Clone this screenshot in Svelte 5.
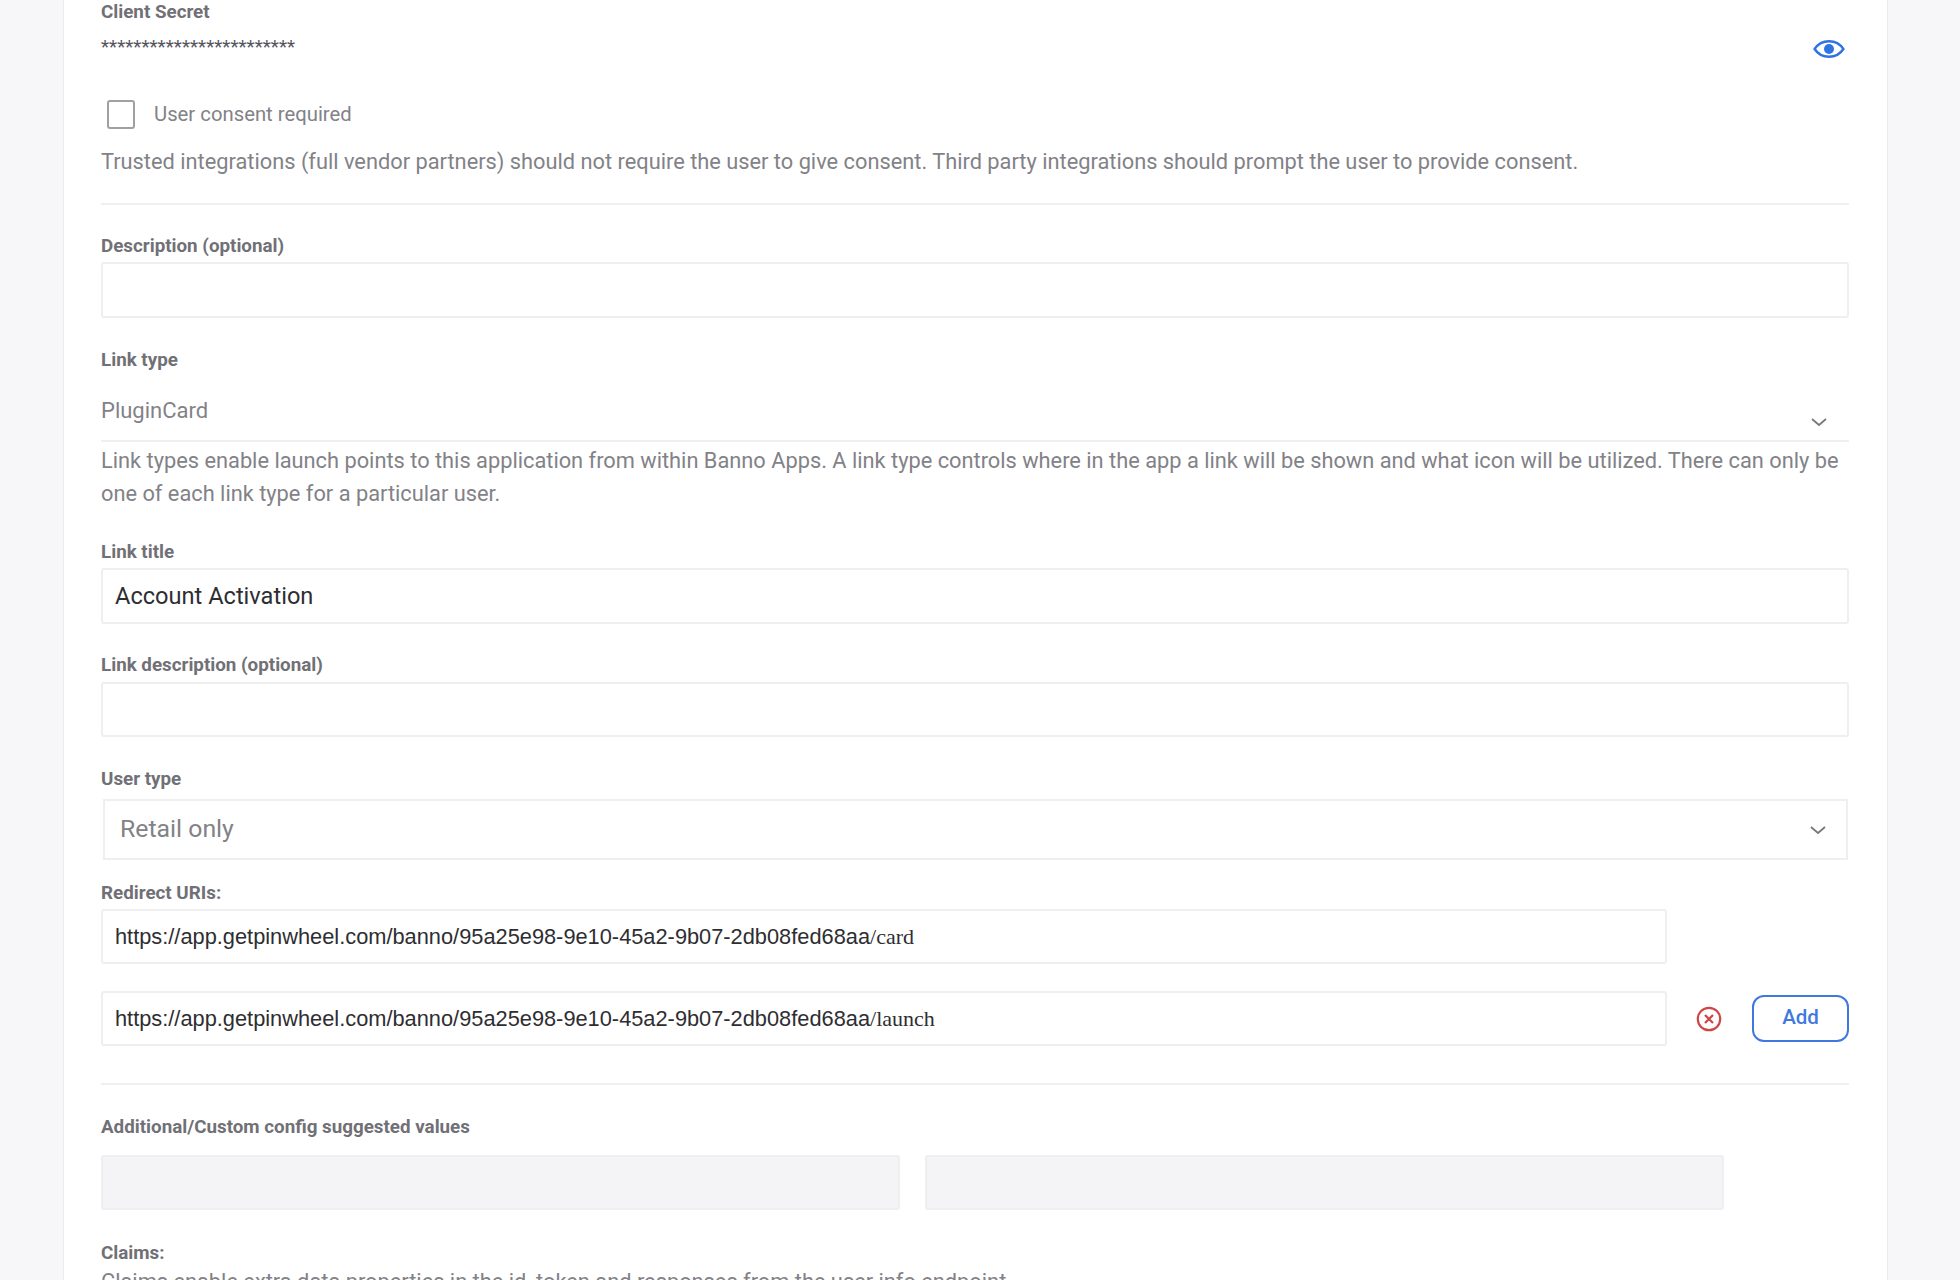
<script>
    const base = 'https://app.getpinwheel.com/banno/95a25e98-9e10-45a2-9b07-2db08fed68aa';
</script>

<div class="card">
    <div class="label">Client Secret</div>
    <div class="secret">
        <span class="stars">************************</span>
        <svg class="eye" width="32" height="20" viewBox="0 0 32 20" aria-hidden="true">
            <path d="M1.6 10C5 4.8 10 2.2 16 2.2S27 4.8 30.4 10C27 15.2 22 17.8 16 17.8S5 15.2 1.6 10Z" fill="none" stroke="#2f72e4" stroke-width="2.4" />
            <circle cx="16" cy="10" r="5" fill="#2f72e4" />
        </svg>
    </div>
    <div class="consent">
        <span class="checkbox"></span>
        <span class="consent-text">User consent required</span>
    </div>
    <p class="help trusted">Trusted integrations (full vendor partners) should not require the user to give consent. Third party integrations should prompt the user to provide consent.</p>
    <hr class="rule-top" />

    <div class="label description">Description (optional)</div>
    <div class="input description-input"></div>

    <div class="label link-type">Link type</div>
    <div class="underlined">
        <span>PluginCard</span>
        <svg class="chevron low" width="18" height="10" viewBox="0 0 18 10" aria-hidden="true">
            <path d="M2 2l7 6 7-6" fill="none" stroke="#77787d" stroke-width="1.8" />
        </svg>
    </div>
    <p class="help link-help">Link types enable launch points to this application from within Banno Apps. A link type controls where in the app a link will be shown and what icon will be utilized. There can only be one of each link type for a particular user.</p>

    <div class="label link-title">Link title</div>
    <div class="input title-input">Account Activation</div>

    <div class="label link-desc">Link description (optional)</div>
    <div class="input desc-input"></div>

    <div class="label user-type">User type</div>
    <div class="select">
        <span class="select-text">Retail only</span>
        <svg class="chevron" width="18" height="10" viewBox="0 0 18 10" aria-hidden="true">
            <path d="M2 2l7 6 7-6" fill="none" stroke="#77787d" stroke-width="1.8" />
        </svg>
    </div>

    <div class="label redirect">Redirect URIs:</div>
    <div class="uri-row first">
        <div class="input uri">{base}<span class="suffix">/card</span></div>
    </div>
    <div class="uri-row second">
        <div class="input uri">{base}<span class="suffix">/launch</span></div>
        <svg class="remove" width="26" height="26" viewBox="0 0 26 26" aria-hidden="true">
            <circle cx="13" cy="13" r="11.2" fill="none" stroke="#d04545" stroke-width="2.2" />
            <path d="M9 9l8 8M17 9l-8 8" stroke="#d04545" stroke-width="2.2" />
        </svg>
        <button class="add" type="button">Add</button>
    </div>
    <hr class="rule-bottom" />

    <div class="label additional">Additional/Custom config suggested values</div>
    <div class="config">
        <div class="input disabled"></div>
        <div class="input disabled"></div>
    </div>

    <div class="label claims">Claims:</div>
    <p class="help">Claims enable extra data properties in the id_token and responses from the user info endpoint</p>
</div>

<style>
    :global(body) {
        background: #f7f7f9;
        overflow: hidden;
    }

    .card {
        box-sizing: border-box;
        width: 1825px;
        height: 1280px;
        margin-left: 63px;
        padding: 0 38px 0 37px;
        overflow: hidden;
        background: #fff;
        border-left: 1px solid #ececee;
        border-right: 1px solid #ececee;
        font-family: Roboto, "Liberation Sans", sans-serif;
    }

    .label {
        font-size: 18.8px;
        line-height: 24px;
        font-weight: 700;
        color: #707076;
    }

    .help {
        margin: 0;
        font-size: 21.8px;
        line-height: 33px;
        color: #828287;
    }

    .secret {
        display: flex;
        justify-content: space-between;
        align-items: center;
        height: 30px;
        margin-top: 10px;
        padding-right: 4px;
    }

    .stars {
        margin-bottom: 4px;
        font-size: 18.8px;
        line-height: 24px;
        color: #55555f;
    }

    .consent {
        display: flex;
        align-items: center;
        gap: 19px;
        height: 29px;
        margin-top: 36px;
        padding-left: 6px;
        font-size: 20.3px;
        color: #828287;
    }

    .consent-text {
        margin-bottom: 2px;
    }

    .checkbox {
        box-sizing: border-box;
        width: 28px;
        height: 29px;
        border: 2px solid #a0a0a4;
        border-radius: 3px;
    }

    .trusted {
        margin-top: 16px;
    }

    hr {
        height: 2px;
        margin: 0;
        border: 0;
        background: #efeff1;
    }

    .rule-top {
        margin-top: 25px;
    }

    .rule-bottom {
        margin-top: 37px;
    }

    .input {
        box-sizing: border-box;
        display: flex;
        align-items: center;
        height: 56px;
        padding: 0 12px;
        background: #fff;
        border: 2px solid #efeff1;
        border-radius: 3px;
        font-size: 23.6px;
        color: #2e2e32;
    }

    .description { margin-top: 29px; }
    .description-input { margin-top: 4px; }
    .link-type { margin-top: 30px; }

    .underlined {
        box-sizing: border-box;
        display: flex;
        justify-content: space-between;
        height: 70px;
        padding: 27px 21px 0 0;
        border-bottom: 2px solid #efeff1;
        font-size: 22px;
        line-height: 24px;
        color: #828287;
    }

    .chevron {
        flex: none;
    }

    .chevron.low {
        margin-top: 18px;
    }

    .link-help { margin-top: 2px; }
    .link-title { margin-top: 30px; }
    .title-input { margin-top: 4px; }
    .link-desc { margin-top: 29px; }
    .desc-input { margin-top: 5px; height: 55px; }
    .user-type { margin-top: 30px; }

    .select {
        box-sizing: border-box;
        display: flex;
        justify-content: space-between;
        align-items: center;
        height: 61px;
        margin: 8px 1px 0 2px;
        padding: 0 19px 0 15px;
        border: 2px solid #efeff1;
        font-size: 24.8px;
        color: #828287;
    }

    .select-text {
        margin-bottom: 2px;
    }

    .redirect { margin-top: 21px; }

    .uri-row {
        display: flex;
        align-items: center;
    }

    .uri-row.first { margin-top: 4px; }
    .uri-row.second { margin-top: 27px; }

    .uri {
        flex: none;
        width: 1566px;
        height: 55px;
        padding-top: 1px;
        font-family: "Liberation Sans", Arial, sans-serif;
        font-size: 21.8px;
        white-space: pre;
    }

    .suffix {
        font-family: "Liberation Serif", serif;
        font-size: 22px;
    }

    .remove {
        flex: none;
        margin-left: 29px;
    }

    .add {
        width: 98px;
        height: 47px;
        margin-left: 30px;
        padding: 0 0 4px;
        background: #fff;
        border: 2px solid #3f78e0;
        border-radius: 12px;
        font-family: Roboto, sans-serif;
        font-size: 20.5px;
        font-weight: 500;
        color: #3f78e0;
    }

    .additional { margin-top: 30px; }

    .config {
        display: flex;
        gap: 25px;
        margin-top: 16px;
    }

    .disabled {
        width: 799px;
        height: 55px;
        background: #f4f4f6;
    }

    .claims { margin-top: 31px; }
</style>
